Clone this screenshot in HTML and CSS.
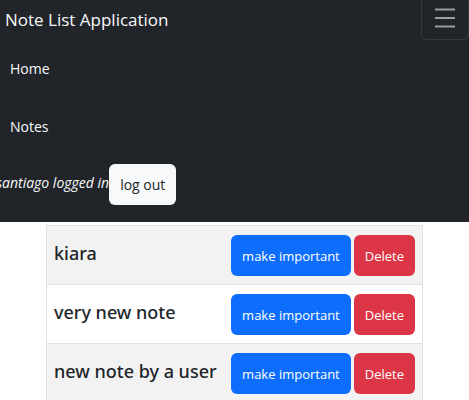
FILE: index.html
```html
<!DOCTYPE html>
<html lang="en">
<head>
<meta charset="utf-8">
<meta name="viewport" content="width=device-width, initial-scale=1">
<title>Note List Application</title>
<link rel="stylesheet" href="styles.css">
</head>
<body>
<header class="navbar">
  <div class="navbar-top">
    <a class="brand" href="#">Note List Application</a>
    <button class="toggler" type="button" aria-label="Toggle navigation">
      <svg class="toggler-icon" viewBox="0 0 22 22" aria-hidden="true">
        <path d="M1 2.5h20M1 11h20M1 19.5h20" fill="none" stroke="#9b9d9e" stroke-width="2"/>
      </svg>
    </button>
  </div>
  <nav class="nav-links">
    <a class="nav-link" href="#">Home</a>
    <a class="nav-link" href="#">Notes</a>
  </nav>
  <div class="session">
    <em class="user">santiago logged in</em>
    <button class="btn btn-light" type="button">log out</button>
  </div>
</header>
<main class="content">
  <table class="notes">
    <tbody>
      <tr>
        <td class="note">kiara</td>
        <td class="actions"><div class="button-group"><button class="btn btn-primary" type="button">make important</button><button class="btn btn-danger" type="button">Delete</button></div></td>
      </tr>
      <tr>
        <td class="note">very new note</td>
        <td class="actions"><div class="button-group"><button class="btn btn-primary" type="button">make important</button><button class="btn btn-danger" type="button">Delete</button></div></td>
      </tr>
      <tr>
        <td class="note">new note by a user</td>
        <td class="actions"><div class="button-group"><button class="btn btn-primary" type="button">make important</button><button class="btn btn-danger" type="button">Delete</button></div></td>
      </tr>
    </tbody>
  </table>
</main>
</body>
</html>
```
FILE: styles.css
```css
* {
  box-sizing: border-box;
}

body {
  margin: 0;
  background: #fff;
  color: #212529;
  font-family: "Open Sans", "Noto Sans", sans-serif;
  font-size: 13px;
  line-height: 24px;
  overflow: hidden;
}

.navbar {
  background: #212529;
  color: #f8f9fa;
  padding-bottom: 17px;
}

.navbar-top {
  display: flex;
  justify-content: space-between;
  align-items: center;
  height: 40px;
}

.brand {
  padding-left: 5px;
  color: inherit;
  font-size: 17px;
  text-decoration: none;
  white-space: nowrap;
}

.toggler {
  height: 40px;
  padding: 0 12px 4px;
  border: 1px solid #35393d;
  border-width: 0 1px 1px;
  border-radius: 0 0 6px 6px;
  background: transparent;
}

.toggler-icon {
  display: block;
  width: 22px;
  height: 22px;
}

.nav-links {
  display: flex;
  flex-direction: column;
}

.nav-link {
  padding: 17px 10px;
  color: inherit;
  font-size: 14px;
  text-decoration: none;
}

.session {
  display: flex;
  align-items: center;
  margin: 8px 0 0 -4px;
}

.user {
  padding-bottom: 3px;
  font-size: 14px;
  white-space: nowrap;
}

.btn {
  height: 41px;
  padding: 0 11px;
  border: 0;
  border-radius: 6px;
  color: #fff;
  font: inherit;
  white-space: nowrap;
}

.btn-light {
  background: #f8f9fa;
  color: #212529;
  font-size: 14px;
}

.btn-primary {
  background: #0d6efd;
}

.btn-danger {
  background: #dc3545;
}

.content {
  padding: 3px 46px 0;
}

.notes {
  width: 100%;
  border-collapse: collapse;
  border: 1px solid #dee2e6;
}

.notes tr {
  border-bottom: 1px solid #dee2e6;
}

.notes tr:nth-child(odd) {
  background: #f2f2f2;
}

.notes td {
  padding: 9px 7px 8px;
}

.notes .note {
  padding: 0 0 4px 7px;
  font-family: "Noto Sans", "Open Sans", sans-serif;
  font-size: 18px;
  font-weight: 500;
  white-space: nowrap;
}

.notes .actions {
  width: 1px;
}

.button-group {
  display: flex;
  gap: 3px;
}
```
